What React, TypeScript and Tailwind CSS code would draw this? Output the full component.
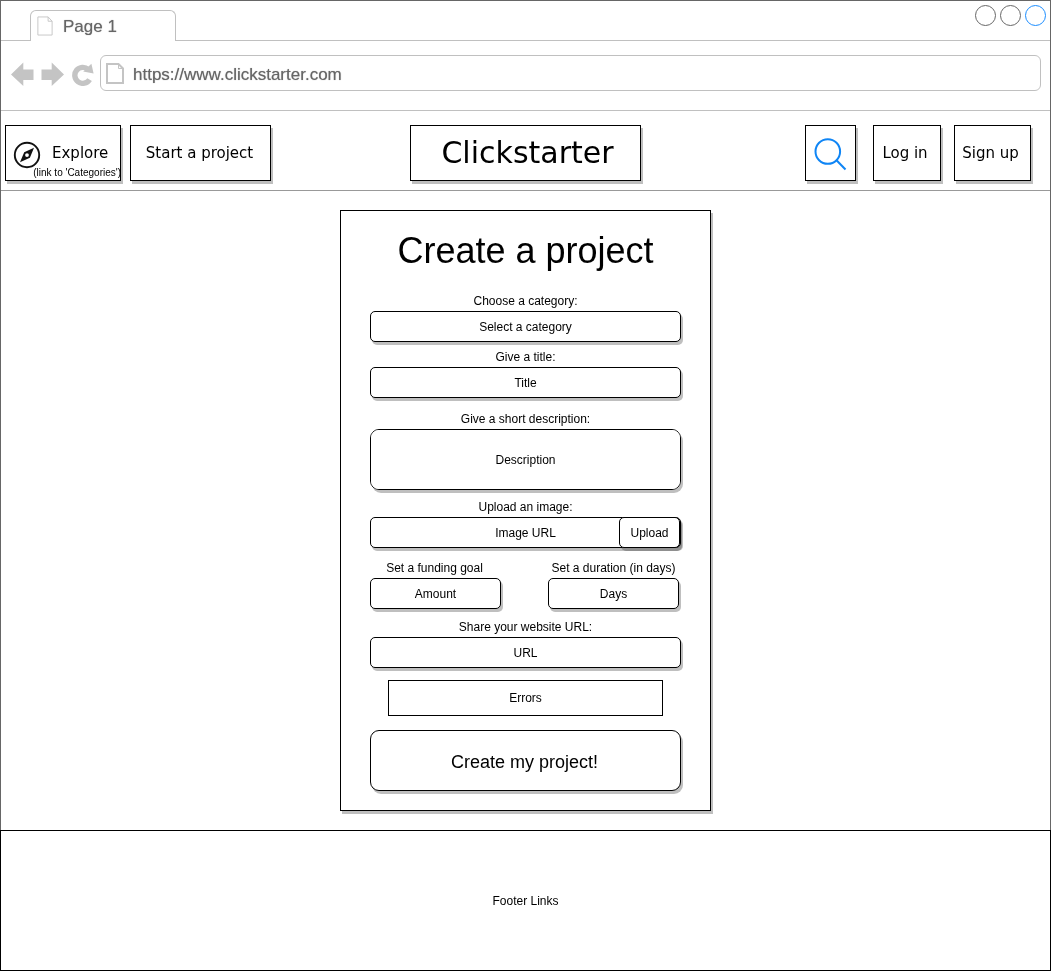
import React from "react";

const SANS = "font-['Liberation_Sans',Arial,sans-serif]";
const WIDE = "font-['DejaVu_Sans',Verdana,sans-serif]";
const SHADOW = "shadow-[2px_3px_0_rgba(0,0,0,0.25)]";
const NAV_BOX = `h-14 border border-black bg-white text-[15px] whitespace-nowrap ${WIDE} ${SHADOW}`;
const CHROME_TEXT = "text-[17px] leading-5 text-[#666] [text-shadow:0_0_1px_#999]";
const CONTROL = `block w-full border border-black bg-white text-center text-xs text-black placeholder:text-black placeholder:opacity-100 ${SHADOW}`;
const FIELD = `${CONTROL} h-[31px] rounded-[5px]`;
const LABEL = "block text-center text-xs leading-5 whitespace-nowrap";

function PageIcon({ className, weight }: { className: string; weight: number }) {
  return (
    <svg
      viewBox="0 0 18 21"
      preserveAspectRatio="none"
      className={className}
      fill="none"
      stroke="#c4c4c4"
      strokeWidth={weight}
      aria-hidden="true"
    >
      <path d="M1 1H12.5L17 5.5V20H1Z" />
      <path d="M12.5 1V5.5H17" strokeWidth="1" />
    </svg>
  );
}

function CompassIcon() {
  return (
    <svg viewBox="0 0 28 28" className="size-7 shrink-0" aria-hidden="true">
      <circle cx="14" cy="14" r="12.2" fill="none" stroke="#111" strokeWidth="1.9" />
      <path
        fillRule="evenodd"
        fill="#111"
        d="M21 6.8L16.9 16.7L7 21.2L11.2 11.2ZM14 12.2A1.9 1.9 0 1 0 14 16A1.9 1.9 0 1 0 14 12.2Z"
      />
    </svg>
  );
}

function BrowserTabs() {
  return (
    <div className="flex h-10 items-start justify-between border-b border-[#c0c0c0] pr-1 pl-[29px]">
      <button
        type="button"
        className={`mt-[9px] flex h-[31px] w-[146px] items-center rounded-t-[6px] border border-b-0 border-[#c0c0c0] bg-white pl-1.5 ${CHROME_TEXT}`}
      >
        <PageIcon className="mr-2.5 h-5 w-4" weight={1} />
        <span className="pt-0.5">Page 1</span>
      </button>
      <div className="mt-1 flex gap-1">
        <button type="button" aria-label="Minimize" className="size-[21px] rounded-full border border-[#666]" />
        <button type="button" aria-label="Maximize" className="size-[21px] rounded-full border border-[#666]" />
        <button type="button" aria-label="Close" className="size-[21px] rounded-full border border-[#1a8cff]" />
      </div>
    </div>
  );
}

function Toolbar() {
  return (
    <div className="flex h-[70px] items-start border-b border-[#c0c0c0] pt-3.5 pr-[9px] pl-2.5">
      <div className="flex h-9 shrink-0 items-center pt-0.5">
        <button type="button" aria-label="Back">
          <svg viewBox="0 0 23 24" className="h-6 w-[23px]" fill="#c4c4c4">
            <path d="M0 12.5L12.3 .5V7.5H22.5V18H12.3V24Z" />
          </svg>
        </button>
        <button type="button" aria-label="Forward" className="ml-[7px]">
          <svg viewBox="0 0 23 24" className="h-6 w-[23px]" fill="#c4c4c4">
            <path d="M23 12.5L10.7 .5V7.5H.5V18H10.7V24Z" />
          </svg>
        </button>
        <button type="button" aria-label="Reload" className="ml-[7px]">
          <svg viewBox="0 0 23 24" className="h-6 w-[23px]">
            <path
              d="M18.6 17.6A8 8 0 1 1 17.2 7.4"
              fill="none"
              stroke="#c4c4c4"
              strokeWidth="5.4"
            />
            <path d="M20.4 1.8L22.6 11.6L12.2 9.4Z" fill="#c4c4c4" />
          </svg>
        </button>
      </div>
      <label className="ml-[6px] flex h-9 flex-1 items-center rounded-[6px] border border-[#c0c0c0] bg-white pl-[5px]">
        <PageIcon className="h-[21px] w-[18px] shrink-0" weight={2} />
        <input
          type="text"
          aria-label="Address"
          defaultValue="https://www.clickstarter.com"
          className={`ml-[9px] w-full bg-transparent pt-[3px] outline-none ${CHROME_TEXT}`}
        />
      </label>
    </div>
  );
}

function SiteHeader() {
  return (
    <header className="grid h-20 grid-cols-[1fr_auto_1fr] items-start border-b border-[#999] pt-3.5">
      <nav className="flex gap-[9px] pl-1">
        <button type="button" className={`${NAV_BOX} flex w-[116px] flex-col justify-end pb-px`}>
          <span className="flex items-center gap-[11px] pl-[7px]">
            <CompassIcon />
            <span className="pb-1 leading-5">Explore</span>
          </span>
          <span className={`-mt-0.5 -mr-px self-end text-[10px] leading-3 ${SANS}`}>
            (link to &#39;Categories&#39;)
          </span>
        </button>
        <button type="button" className={`${NAV_BOX} w-[141px] pr-0.5`}>
          Start a project
        </button>
      </nav>
      <a
        href="#home"
        className={`flex h-14 w-[231px] items-center justify-center border border-black bg-white pb-0.5 pl-1 text-[30px] ${WIDE} ${SHADOW}`}
      >
        Clickstarter
      </a>
      <nav className="flex justify-end pr-[19px]">
        <button type="button" aria-label="Search" className={`${NAV_BOX} mr-[17px] w-[51px] pt-1 pl-2`}>
          <svg viewBox="0 0 34 34" className="size-[34px]" fill="none" stroke="#0f85f5" strokeWidth="2">
            <circle cx="13.8" cy="13.5" r="12.3" />
            <path d="M22.5 22.2L31.5 31.5" />
          </svg>
        </button>
        <button type="button" className={`${NAV_BOX} mr-[13px] w-[68px] pr-1`}>
          Log in
        </button>
        <button type="button" className={`${NAV_BOX} w-[77px] pr-1`}>
          Sign up
        </button>
      </nav>
    </header>
  );
}

function ProjectForm() {
  return (
    <form
      onSubmit={(e) => e.preventDefault()}
      className={`mx-auto w-[371px] border border-black bg-white px-[29px] pb-[19px] ${SHADOW}`}
    >
      <h1 className="text-center text-4xl leading-[80px] whitespace-nowrap">Create a project</h1>

      <label htmlFor="category" className={LABEL}>Choose a category:</label>
      <select id="category" className={`${FIELD} appearance-none [text-align-last:center]`}>
        <option>Select a category</option>
      </select>

      <label htmlFor="title" className={`${LABEL} mt-[5px]`}>Give a title:</label>
      <input id="title" type="text" placeholder="Title" className={FIELD} />

      <label htmlFor="description" className={`${LABEL} mt-[11px]`}>Give a short description:</label>
      <textarea
        id="description"
        placeholder="Description"
        className={`${CONTROL} h-[61px] resize-none rounded-[9px] py-[22px] leading-4`}
      />

      <label htmlFor="image" className={`${LABEL} mt-[7px]`}>Upload an image:</label>
      <div className="relative">
        <input id="image" type="text" placeholder="Image URL" className={FIELD} />
        <button
          type="button"
          className={`absolute top-0 right-px h-[31px] w-[61px] rounded-[5px] border border-black bg-white text-xs ${SHADOW}`}
        >
          Upload
        </button>
      </div>

      <div className="mt-2.5 flex justify-between pr-0.5">
        <div className="w-[131px]">
          <label htmlFor="goal" className={`${LABEL} pr-0.5`}>Set a funding goal</label>
          <input id="goal" type="text" placeholder="Amount" className={FIELD} />
        </div>
        <div className="w-[131px]">
          <label htmlFor="duration" className={LABEL}>Set a duration (in days)</label>
          <input id="duration" type="text" placeholder="Days" className={FIELD} />
        </div>
      </div>

      <label htmlFor="website" className={`${LABEL} mt-2`}>Share your website URL:</label>
      <input id="website" type="text" placeholder="URL" className={FIELD} />

      <div role="alert" className="mx-[18px] mt-3 flex h-9 items-center justify-center border border-black text-xs">
        Errors
      </div>

      <button
        type="submit"
        className={`mt-3.5 block h-[61px] w-full rounded-[9px] border border-black bg-white pt-0.5 pr-0.5 text-lg ${SHADOW}`}
      >
        Create my project!
      </button>
    </form>
  );
}

export default function App() {
  return (
    <div className={`flex min-h-screen flex-col bg-white text-black ${SANS}`}>
      <div className="border border-b-0 border-[#666]">
        <BrowserTabs />
        <Toolbar />
        <SiteHeader />
        <main className="py-[19px]">
          <ProjectForm />
        </main>
      </div>
      <footer className="flex min-h-[141px] flex-1 items-center justify-center border border-black text-xs">
        Footer Links
      </footer>
    </div>
  );
}
